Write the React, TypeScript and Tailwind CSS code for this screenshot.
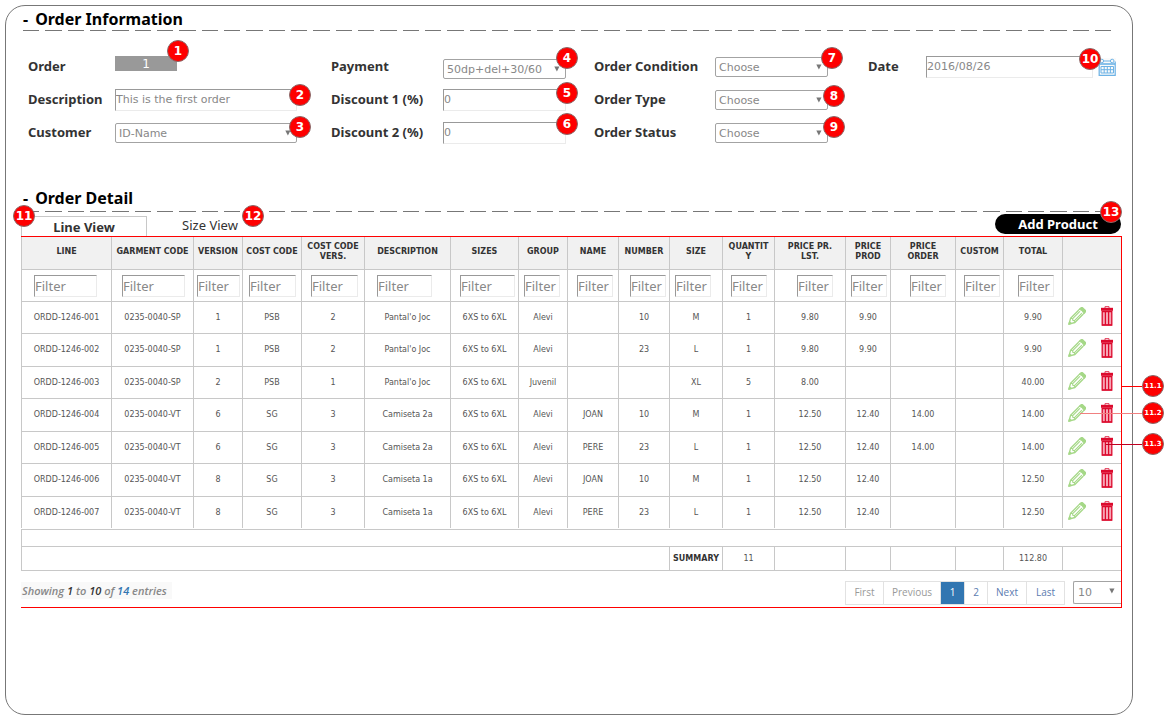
import React from 'react';
import clsx from 'clsx';

const columns = [
  { name: 'LINE', width: 'w-[90px]', pad: 'pl-[12px]', input: 'w-[63px]', head: 'px-0' },
  { name: 'GARMENT CODE', width: 'w-[82px]', pad: 'pl-[10px]', input: 'w-[63px]', head: 'px-0' },
  { name: 'VERSION', width: 'w-[49px]', pad: 'pl-[3px]', input: 'w-[43px]', head: 'px-0' },
  { name: 'COST CODE', width: 'w-[59px]', pad: 'pl-[6px]', input: 'w-[47px]', head: 'px-0' },
  { name: 'COST CODE VERS.', width: 'w-[63px]', pad: 'pl-[9px]', input: 'w-[47px]', head: 'px-0' },
  { name: 'DESCRIPTION', width: 'w-[86px]', pad: 'pl-[12px]', input: 'w-[55px]', head: 'px-0' },
  { name: 'SIZES', width: 'w-[68px]', pad: 'pl-[9px]', input: 'w-[55px]', head: 'px-0' },
  { name: 'GROUP', width: 'w-[49px]', pad: 'pl-[5px]', input: 'w-[36px]', head: 'px-0' },
  { name: 'NAME', width: 'w-[51px]', pad: 'pl-[9px]', input: 'w-[36px]', head: 'px-0' },
  { name: 'NUMBER', width: 'w-[51px]', pad: 'pl-[11px]', input: 'w-[36px]', head: 'px-0' },
  { name: 'SIZE', width: 'w-[53px]', pad: 'pl-[5px]', input: 'w-[36px]', head: 'px-0' },
  { name: 'QUANTITY', width: 'w-[52px]', pad: 'pl-[8px]', input: 'w-[36px]', head: 'px-[4px] [overflow-wrap:anywhere]' },
  { name: 'PRICE PR. LST.', width: 'w-[71px]', pad: 'pl-[22px]', input: 'w-[36px]', head: 'px-[8px]' },
  { name: 'PRICE PROD', width: 'w-[45px]', pad: 'pl-[5px]', input: 'w-[36px]', head: 'px-0' },
  { name: 'PRICE ORDER', width: 'w-[65px]', pad: 'pl-[19px]', input: 'w-[36px]', head: 'px-[8px]' },
  { name: 'CUSTOM', width: 'w-[48px]', pad: 'pl-[8px]', input: 'w-[36px]', head: 'px-0' },
  { name: 'TOTAL', width: 'w-[59px]', pad: 'pl-[14px]', input: 'w-[36px]', head: 'px-0' },
];

const rows = [
  ['ORDD-1246-001', '0235-0040-SP', '1', 'PSB', '2', "Pantal'o Joc", '6XS to 6XL', 'Alevi', '', '10', 'M', '1', '9.80', '9.90', '', '', '9.90'],
  ['ORDD-1246-002', '0235-0040-SP', '1', 'PSB', '2', "Pantal'o Joc", '6XS to 6XL', 'Alevi', '', '23', 'L', '1', '9.80', '9.90', '', '', '9.90'],
  ['ORDD-1246-003', '0235-0040-SP', '2', 'PSB', '1', "Pantal'o Joc", '6XS to 6XL', 'Juvenil', '', '', 'XL', '5', '8.00', '', '', '', '40.00'],
  ['ORDD-1246-004', '0235-0040-VT', '6', 'SG', '3', 'Camiseta 2a', '6XS to 6XL', 'Alevi', 'JOAN', '10', 'M', '1', '12.50', '12.40', '14.00', '', '14.00'],
  ['ORDD-1246-005', '0235-0040-VT', '6', 'SG', '3', 'Camiseta 2a', '6XS to 6XL', 'Alevi', 'PERE', '23', 'L', '1', '12.50', '12.40', '14.00', '', '14.00'],
  ['ORDD-1246-006', '0235-0040-VT', '8', 'SG', '3', 'Camiseta 1a', '6XS to 6XL', 'Alevi', 'JOAN', '10', 'M', '1', '12.50', '12.40', '', '', '12.50'],
  ['ORDD-1246-007', '0235-0040-VT', '8', 'SG', '3', 'Camiseta 1a', '6XS to 6XL', 'Alevi', 'PERE', '23', 'L', '1', '12.50', '12.40', '', '', '12.50'],
];

const inset = 'border border-t-[#999] border-l-[#999] border-r-[#ebebeb] border-b-[#ebebeb] bg-white outline-none';
const fieldText = "font-['DejaVu_Sans',sans-serif] text-[11px] text-[#888]";
const line = 'border-[#c8c8c8]';

function Badge({ children, className, small }: { children: React.ReactNode; className?: string; small?: boolean }) {
  return (
    <span
      className={clsx(
        "z-10 flex h-[22px] w-[22px] shrink-0 items-center justify-center rounded-full border border-[#8a6a6a] bg-[#fe0000] font-['DejaVu_Sans',sans-serif] font-bold text-white",
        small ? 'text-[7px]' : 'text-[12px]',
        className,
      )}
    >
      {children}
    </span>
  );
}

function Rule() {
  return (
    <div className="h-px bg-[repeating-linear-gradient(90deg,#777_0_16px,transparent_16px_22px,#777_22px_39px,transparent_39px_45px,#777_45px_61px,transparent_61px_67px)]" />
  );
}

function Heading({ children }: { children: React.ReactNode }) {
  return (
    <h2 className="flex gap-[7px] text-[16px] leading-[22px] font-bold text-black">
      <span>-</span>
      {children}
    </h2>
  );
}

function Arrow() {
  return (
    <svg viewBox="0 0 6 6" className="pointer-events-none absolute top-[7px] right-[6px] h-[6px] w-[6px]" aria-hidden="true">
      <path d="M0.3 0.5h5.2L2.9 5.6z" fill="#777" />
    </svg>
  );
}

function Row({ id, label, labelWidth, children }: { id: string; label: string; labelWidth: string; children: React.ReactNode }) {
  return (
    <div className="flex h-[33px] items-center">
      <label htmlFor={id} className={clsx('shrink-0 text-[13px] font-bold whitespace-nowrap text-[#333]', labelWidth)}>
        {label}
      </label>
      {children}
    </div>
  );
}

function Select({ id, value, width, badge, badgeAt, className }: { id: string; value: string; width: string; badge: string; badgeAt: string; className?: string }) {
  return (
    <div className={clsx('relative', width, className)}>
      <select id={id} className={clsx('block h-[20px] w-full appearance-none rounded-[2px] border border-[#a3a3a3] bg-white pt-[2px] pl-[3px] outline-none', fieldText)}>
        <option>{value}</option>
      </select>
      <Arrow />
      <Badge className={clsx('absolute', badgeAt)}>{badge}</Badge>
    </div>
  );
}

function TextField({ id, value, width, badge, badgeAt }: { id: string; value: string; width: string; badge: string; badgeAt: string }) {
  return (
    <div className={clsx('relative', width)}>
      <input id={id} defaultValue={value} className={clsx('block h-[22px] w-full', inset, fieldText)} />
      <Badge className={clsx('absolute', badgeAt)}>{badge}</Badge>
    </div>
  );
}

function CalendarIcon() {
  return (
    <svg viewBox="0 0 18 18" className="block h-[18px] w-[18px]" fill="none" stroke="#6db3e6" aria-hidden="true">
      <path d="M5.5 3h7" />
      <circle cx="3.8" cy="3" r="1.8" />
      <circle cx="14.2" cy="3" r="1.8" />
      <path d="M0.800 6h16.500" strokeWidth="1.6" />
      <path d="M1.2 3.5v13.8h16V3.5" strokeWidth="1.2" />
      <path d="M3 8.500h12.500v6.500H3zM3 11.700h12.500M6.200 8.500v6.500M9.300 8.500v6.500M12.400 8.500v6.500" />
    </svg>
  );
}

function PencilIcon() {
  return (
    <svg viewBox="0 0 18 18" className="block h-[18px] w-[18px]" fill="none" stroke="#a5d887" strokeWidth="1.3" strokeLinejoin="round" aria-hidden="true">
      <path d="M0.900 17.200l1.700-6L12.300 1.500l4.300 4.300L6.900 15.500z" />
      <path d="M12.200 1.600l1.100-.9q.9-.4 1.700.4l2.100 2.100q.8.900.2 1.700l-.8.900z" fill="#a5d887" />
      <path d="M2.800 11.300l1.700.4.400 1.700 1.600.4.400 1.500M4.700 11.600l7.900-7.900M6.500 13.600l7.900-7.900" strokeWidth="1.100" />
      <path d="M10.900 3l4.300 4.300" stroke="#fff" strokeWidth=".8" />
      <path d="M0.900 17.200l.7-2.300 1.700 1.600z" fill="#a5d887" />
    </svg>
  );
}

function TrashIcon() {
  return (
    <svg viewBox="0 0 12 20" className="block h-[20px] w-[12px]" aria-hidden="true">
      <path d="M4 2V.6h4V2" fill="none" stroke="#e2445f" />
      <path d="M0 1.800h12v3H0z" fill="#dc0a2d" />
      <path d="M1.200 5.500h9.600v13.700H1.200z" fill="#f6a5b5" stroke="#dc0a2d" strokeWidth="1.300" />
      <path d="M4.400 6v13M7.600 6v13" stroke="#dc0a2d" strokeWidth="1.200" />
      <path d="M1 18.300h10v1.200H1z" fill="#dc0a2d" />
    </svg>
  );
}

function Callout({ text, className, lineClass }: { text: string; className: string; lineClass: string }) {
  return (
    <div className={clsx('pointer-events-none absolute right-[-43px] flex items-center', className)}>
      <span className={clsx('h-px', lineClass)} />
      <Badge small>{text}</Badge>
    </div>
  );
}

const pages = [
  { text: 'First', style: 'w-[38px] bg-white text-[#999]' },
  { text: 'Previous', style: 'w-[57px] bg-white text-[#999]' },
  { text: '1', style: 'w-[24px] bg-[#3276b1] text-white' },
  { text: '2', style: 'w-[23px] bg-white text-[#5b7bb0]' },
  { text: 'Next', style: 'w-[39px] bg-white text-[#5b7bb0]' },
  { text: 'Last', style: 'w-[37px] bg-white text-[#5b7bb0]' },
];

export default function App() {
  return (
    <div className="flex min-h-screen bg-white pt-[5px] pr-[37px] pb-[3px] pl-[5px] font-['Noto_Sans',sans-serif]">
      <main className="min-w-0 flex-1 rounded-[20px] border border-[#777] pt-[2px]">
        <section className="pr-[21px] pl-[17px]">
          <Heading>Order Information</Heading>
          <Rule />
        </section>

        <form className="mt-[19px] grid grid-cols-[303fr_263fr_274fr_250fr] pr-[14px] pl-[22px]">
          <div>
            <Row id="order" label="Order" labelWidth="w-[87px]">
              <div className="relative mb-[6px] w-[62px]">
                <output id="order" className="block h-[15px] bg-[#999] text-center font-['DejaVu_Sans',sans-serif] text-[12px] leading-[17px] text-white">1</output>
                <Badge className="absolute -top-[16px] -right-[12px]">1</Badge>
              </div>
            </Row>
            <Row id="description" label="Description" labelWidth="w-[87px]">
              <TextField id="description" value="This is the first order" width="w-[182px]" badge="2" badgeAt="-top-[5px] -right-[14px]" />
            </Row>
            <Row id="customer" label="Customer" labelWidth="w-[87px]">
              <Select id="customer" value="ID-Name" width="w-[182px]" badge="3" badgeAt="-top-[7px] -right-[14px]" />
            </Row>
          </div>
          <div>
            <Row id="payment" label="Payment" labelWidth="w-[112px]">
              <Select id="payment" value="50dp+del+30/60" width="w-[123px]" badge="4" badgeAt="-top-[12px] -right-[12px]" className="mt-[4px]" />
            </Row>
            <Row id="discount1" label="Discount 1 (%)" labelWidth="w-[112px]">
              <TextField id="discount1" value="0" width="w-[123px]" badge="5" badgeAt="-top-[7px] -right-[12px]" />
            </Row>
            <Row id="discount2" label="Discount 2 (%)" labelWidth="w-[112px]">
              <TextField id="discount2" value="0" width="w-[123px]" badge="6" badgeAt="-top-[9px] -right-[12px]" />
            </Row>
          </div>
          <div>
            <Row id="condition" label="Order Condition" labelWidth="w-[121px]">
              <Select id="condition" value="Choose" width="w-[113px]" badge="7" badgeAt="-top-[10px] -right-[15px]" />
            </Row>
            <Row id="type" label="Order Type" labelWidth="w-[121px]">
              <Select id="type" value="Choose" width="w-[113px]" badge="8" badgeAt="-top-[5px] -right-[17px]" />
            </Row>
            <Row id="status" label="Order Status" labelWidth="w-[121px]">
              <Select id="status" value="Choose" width="w-[113px]" badge="9" badgeAt="-top-[7px] -right-[17px]" />
            </Row>
          </div>
          <div>
            <Row id="date" label="Date" labelWidth="w-[58px]">
              <TextField id="date" value="2016/08/26" width="w-[167px]" badge="10" badgeAt="-top-[8px] -right-[8px]" />
              <button type="button" aria-label="Open calendar" className="ml-[5px] bg-[#fafafa]">
                <CalendarIcon />
              </button>
            </Row>
          </div>
        </form>

        <section className="mt-[38px] pr-[21px] pl-[17px]">
          <div className="pb-[2px]">
            <Heading>Order Detail</Heading>
          </div>
          <Rule />
        </section>

        <section className="mt-[2px] pr-[10px] pl-[15px]">
          <div className="flex items-end">
            <div className="relative">
              <button type="button" className={clsx('block h-[20px] w-[126px] border border-b-0 text-[13px] leading-[16px] font-bold text-[#333]', line)}>Line View</button>
              <Badge className="absolute -top-[11px] -left-[8px]">11</Badge>
            </div>
            <div className="relative">
              <button type="button" className="block h-[20px] w-[126px] pb-[2px] text-[13px] leading-[18px] text-[#333]">Size View</button>
              <Badge className="absolute -top-[11px] right-[9px]">12</Badge>
            </div>
            <div className="relative mr-px mb-[2px] ml-auto">
              <button type="button" className="block h-[20px] w-[126px] rounded-full bg-black text-[13px] leading-[18px] font-bold text-white">Add Product</button>
              <Badge className="absolute -top-[13px] -right-[1px]">13</Badge>
            </div>
          </div>

          <div className="relative border-t border-r border-b border-[#f00]">
            <table className="w-full table-fixed border-separate border-spacing-0 text-center font-['DejaVu_Sans',sans-serif] text-[8px] leading-[10px] text-[#555]">
              <colgroup>
                {columns.map((c) => (
                  <col key={c.name} className={c.width} />
                ))}
                <col className="w-[59px]" />
              </colgroup>
              <thead>
                <tr className="h-[32px] bg-[#f1f1f1] text-[#333]">
                  {columns.map((c) => (
                    <th key={c.name} className={clsx('border-l pt-0 pb-[2px] font-bold', line, c.head)}>
                      {c.name}
                    </th>
                  ))}
                  <th aria-label="Actions" className={clsx('border-l p-0', line)} />
                </tr>
                <tr className="h-[32px]">
                  {columns.map((c) => (
                    <td key={c.name} className={clsx('border-t border-l py-0 pr-0', line, c.pad)}>
                      <input aria-label={`Filter ${c.name}`} placeholder="Filter" className={clsx("block h-[22px] font-['Noto_Sans',sans-serif] text-[13px] text-[#888] placeholder:text-[#888]", inset, c.input)} />
                    </td>
                  ))}
                  <td className={clsx('border-t border-l p-0', line)} />
                </tr>
              </thead>
              <tbody>
                {rows.map((r) => (
                  <tr key={r[0]} className="h-[32px] even:h-[33px]">
                    {r.map((v, i) => (
                      <td key={i} className={clsx('border-t border-l p-0', line)}>{v}</td>
                    ))}
                    <td className={clsx('border-t border-l p-0', line)}>
                      <div className="flex items-center pb-[4px] pl-[5px]">
                        <button type="button" aria-label={`Edit ${r[0]}`}><PencilIcon /></button>
                        <button type="button" aria-label={`Delete ${r[0]}`} className="ml-[15px]"><TrashIcon /></button>
                      </div>
                    </td>
                  </tr>
                ))}
              </tbody>
              <tfoot>
                <tr className="h-px"><td colSpan={18} className="p-0" /></tr>
                <tr className="h-[17px]"><td colSpan={18} className={clsx('border-t border-l p-0', line)} /></tr>
                <tr className="h-[25px]">
                  <td colSpan={10} className={clsx('border-y border-l p-0', line)} />
                  <th scope="row" className={clsx('border-y border-l p-0 font-bold text-[#333]', line)}>SUMMARY</th>
                  <td className={clsx('border-y border-l p-0', line)}>11</td>
                  <td className={clsx('border-y border-l p-0', line)} />
                  <td className={clsx('border-y border-l p-0', line)} />
                  <td className={clsx('border-y border-l p-0', line)} />
                  <td className={clsx('border-y border-l p-0', line)} />
                  <td className={clsx('border-y border-l p-0', line)}>112.80</td>
                  <td className={clsx('border-y border-l p-0', line)} />
                </tr>
              </tfoot>
            </table>

            <div className="flex h-[36px] items-center justify-between pt-[7px]">
              <p className="mb-[5px] bg-[#f9f9f9] pr-[5px] pl-[1px] font-['Open_Sans',sans-serif] text-[11px] leading-[17px] font-semibold text-[#888] italic">
                Showing <span className="text-[#333]">1</span> to <span className="text-[#333]">10</span> of <span className="text-[#3276b1]">14</span> entries
              </p>
              <div className="flex items-center">
                <nav aria-label="Pages" className="flex border border-[#e2e2e2] font-['Open_Sans',sans-serif] text-[10px]">
                  {pages.map((p) => (
                    <button key={p.text} type="button" className={clsx('h-[22px] border-r border-[#e2e2e2] last:border-r-0', p.style)}>{p.text}</button>
                  ))}
                </nav>
                <div className="relative ml-[8px] w-[48px]">
                  <select aria-label="Entries per page" className={clsx('block h-[23px] w-full appearance-none rounded-l-[2px] border border-r-0 border-[#a3a3a3] bg-white pt-[2px] pl-[4px] outline-none', fieldText)}>
                    <option>10</option>
                  </select>
                  <Arrow />
                </div>
              </div>
            </div>

            <Callout text="11.1" className="top-[138px]" lineClass="w-[21px] bg-[#f00]" />
            <Callout text="11.2" className="top-[165px]" lineClass="w-[62px] bg-[#f08080]" />
            <Callout text="11.3" className="top-[196px]" lineClass="w-[36px] bg-[#c00020]" />
          </div>
        </section>
      </main>
    </div>
  );
}
